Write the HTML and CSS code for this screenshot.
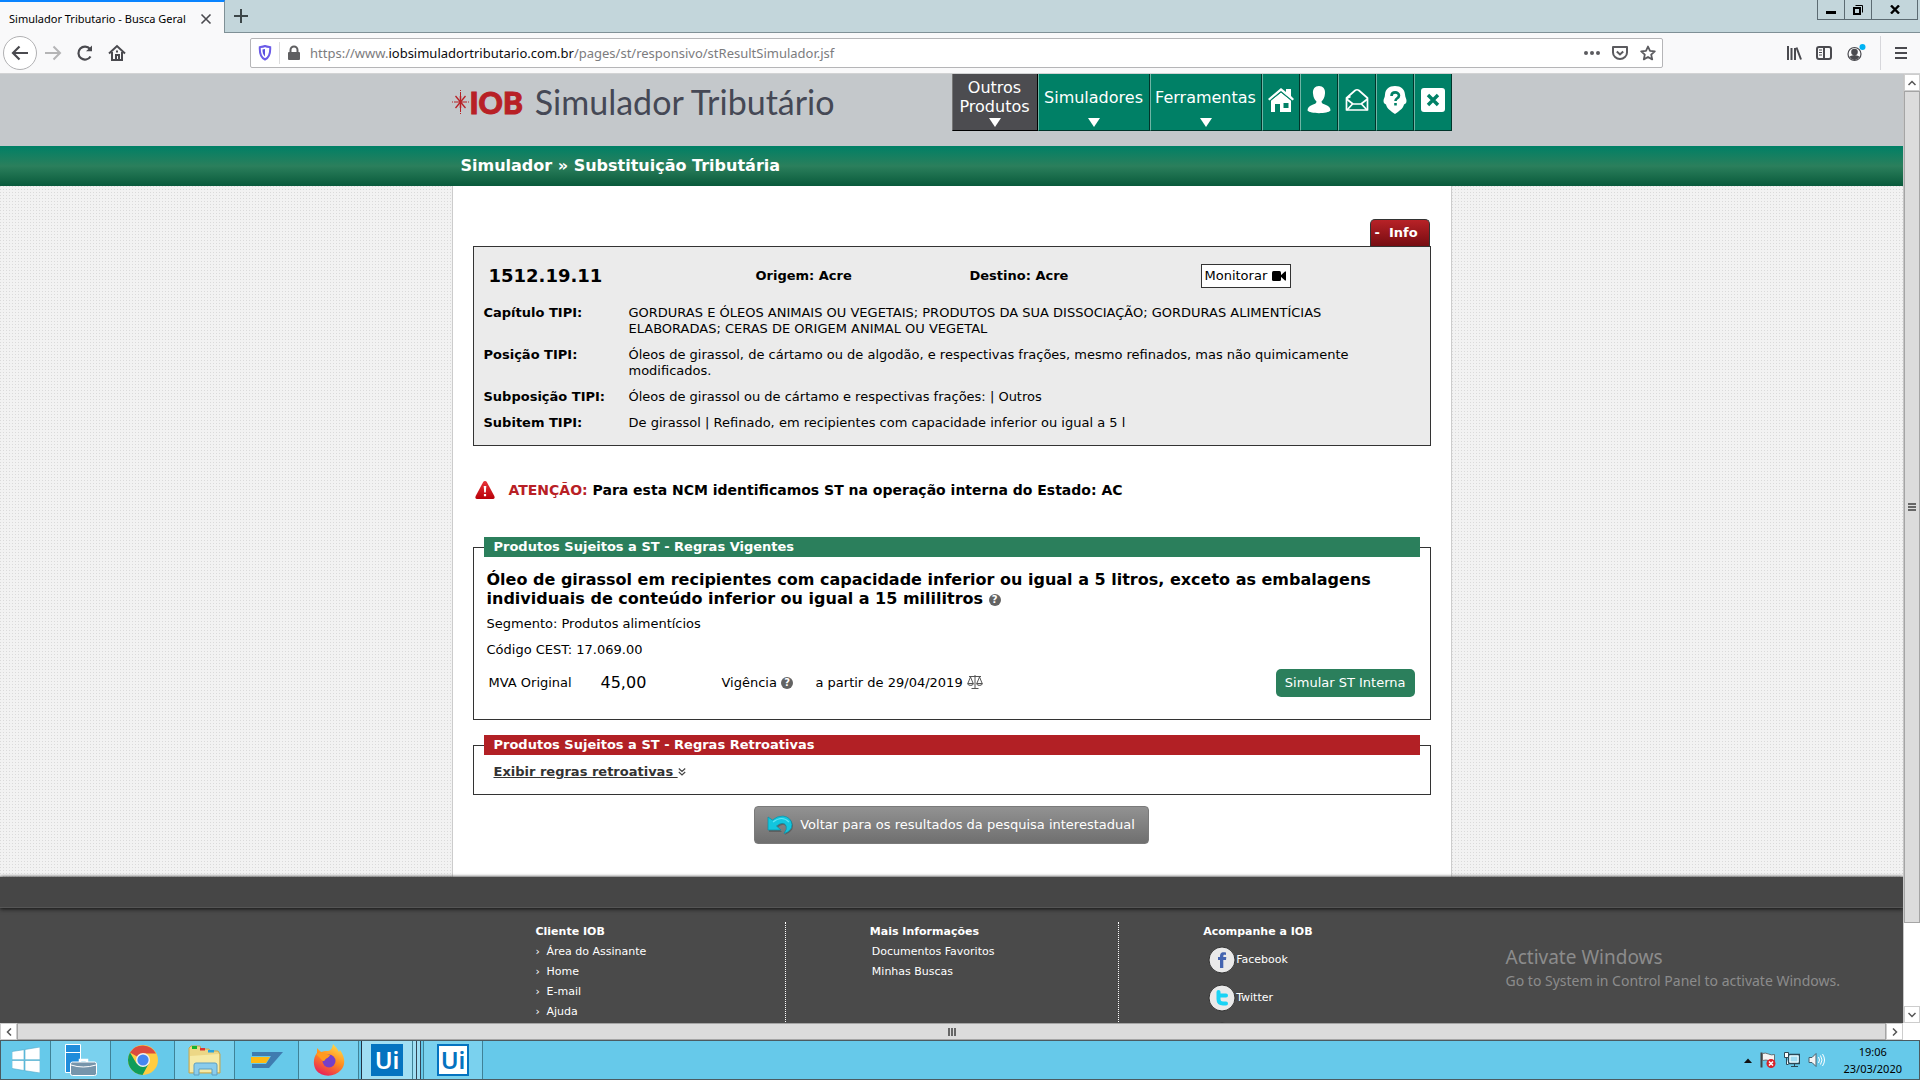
FILE: index.html
```html
<!DOCTYPE html>
<html lang="pt-BR">
<head>
<meta charset="utf-8">
<meta name="viewport" content="width=device-width, initial-scale=1">
<title>Simulador Tributario - Busca Geral</title>
<link rel="stylesheet" href="styles.css">
</head>
<body>
<div class="tabbar">
  <div class="tab">
    <span class="tab-title">Simulador Tributario - Busca Geral</span>
    <button class="plain" aria-label="Fechar aba"><svg width="12" height="12" viewBox="0 0 12 12" stroke="#4a4a4f" stroke-width="1.6"><path d="M1.5 1.5l9 9M10.500 1.500l-9 9"/></svg></button>
  </div>
  <button class="plain new-tab" aria-label="Nova aba"><svg width="14" height="14" viewBox="0 0 14 14" stroke="#3c4648" stroke-width="2"><path d="M7 0v14M0 7h14"/></svg></button>
  <div class="window-buttons">
    <button aria-label="Minimizar"><svg width="10" height="14" viewBox="0 0 10 14"><path d="M0 8h10v3H0z"/></svg></button>
    <button aria-label="Restaurar"><svg width="10" height="10" viewBox="0 0 10 10" fill="none" stroke="#000"><path d="M2.500 .5h7v7"/><path d="M1 3h6v6H1z" stroke-width="2"/></svg></button>
    <button class="wide" aria-label="Fechar"><svg width="10" height="9" viewBox="0 0 10 9" stroke="#000" stroke-width="2.400"><path d="M1 .5l8 8M9 .5l-8 8"/></svg></button>
  </div>
</div>
<div class="toolbar">
  <button class="plain back" aria-label="Voltar"><svg width="18" height="16" viewBox="0 0 18 16" fill="none" stroke="#4a4a4f" stroke-width="2.200"><path d="M17 8H2M8.500 1.500L2 8l6.500 6.500"/></svg></button>
  <button class="plain" aria-label="Avançar"><svg width="18" height="16" viewBox="0 0 18 16" fill="none" stroke="#b5b5b6" stroke-width="2"><path d="M1 8h15M9.500 1.500L16 8l-6.500 6.500"/></svg></button>
  <button class="plain" aria-label="Recarregar"><svg width="18" height="18" viewBox="0 0 18 18" fill="none" stroke="#4a4a4f" stroke-width="2.200"><path d="M14.500 12.500A6.500 6.500 0 1 1 14 5"/><path d="M16 1.500v5.700h-6z" fill="#4a4a4f" stroke="none"/></svg></button>
  <button class="plain" aria-label="Início"><svg width="18" height="18" viewBox="0 0 18 18" fill="none" stroke="#4a4a4f" stroke-width="2"><path d="M1 9.500L9 2l8 7.500"/><path d="M4 8v8h10V8"/><path d="M8 16v-5h3v5M8 7.500h2"/></svg></button>
  <div class="urlbar">
    <svg width="14" height="16" viewBox="0 0 14 16" fill="none"><path d="M7 1c2 .8 4 1 5.200 1.200C12.500 8 11.500 12.500 7 14.500 2.500 12.500 1.500 8 1.800 2.200 3 2 5 1.800 7 1z" stroke="#6b5be8" stroke-width="2"/><path d="M7 4v7.500C5 10 4.400 7.500 4.500 4.600z" fill="#5a4fe0"/></svg>
    <span class="url-line"></span>
    <svg width="14" height="16" viewBox="0 0 14 16"><rect x="1" y="7" width="12" height="8" rx="1" fill="#5f5f61"/><path d="M3.500 8V5a3.500 3.500 0 0 1 7 0v3" fill="none" stroke="#5f5f61" stroke-width="2"/></svg>
    <div class="url" role="textbox" aria-label="Endereço" contenteditable="true" spellcheck="false">https://www.<b>iobsimuladortributario.com.br</b>/pages/st/responsivo/stResultSimulador.jsf</div>
    <button class="plain" aria-label="Ações"><svg width="16" height="16" viewBox="0 0 16 16" fill="#5b5b5f"><circle cx="2" cy="8" r="2"/><circle cx="8" cy="8" r="2"/><circle cx="14" cy="8" r="2"/></svg></button>
    <button class="plain" aria-label="Pocket"><svg width="16" height="16" viewBox="0 0 16 16" fill="none" stroke="#5b5b5f" stroke-width="2"><path d="M1 2h14v5.500a7 6.500 0 0 1-14 0z" stroke-linejoin="round"/><path d="M4.800 6.500L8 9.500l3.200-3"/></svg></button>
    <button class="plain" aria-label="Favoritar"><svg width="16" height="16" viewBox="0 0 16 16" fill="none" stroke="#5b5b5f" stroke-width="1.800"><path d="M8 1.500l2 4.400 4.800.5-3.600 3.200 1 4.800L8 12l-4.200 2.400 1-4.800L1.200 6.400 6 5.900z" stroke-linejoin="round"/></svg></button>
  </div>
  <div class="tools">
    <button class="plain" aria-label="Biblioteca"><svg width="16" height="16" viewBox="0 0 16 16" fill="none" stroke="#4a4a4f" stroke-width="2"><path d="M2 1v14M5.500 3v12M9 3v12M10.500 2.500l4.500 12"/></svg></button>
    <button class="plain" aria-label="Barra lateral"><svg width="16" height="16" viewBox="0 0 16 16" fill="none" stroke="#4a4a4f" stroke-width="2"><rect x="1" y="2" width="14" height="12" rx="2"/><path d="M8 2v12"/><path d="M3 5h3M3 7.500h3M3 10h3" stroke-width="1"/></svg></button>
    <button class="plain" aria-label="Conta"><svg width="20" height="20" viewBox="0 0 20 20"><circle cx="8.500" cy="11" r="6.500" fill="none" stroke="#4a4a4f" stroke-width="1.200"/><circle cx="8.500" cy="9" r="3.300" fill="#4a4a4f"/><path d="M3.500 13.500q5-3 10 0-2 3.500-5 3.500t-5-3.500z" fill="#4a4a4f"/><circle cx="16.500" cy="4" r="3" fill="#00b3f4"/></svg></button>
    <span class="tool-line"></span>
    <button class="plain" aria-label="Menu"><svg width="12" height="12" viewBox="0 0 12 12" fill="#4a4a4f"><path d="M0 0h12v2H0zM0 5h12v2H0zM0 10h12v2H0z"/></svg></button>
  </div>
</div>

<div class="viewport">
  <div class="site">
    <header class="site-header">
      <div class="wrap header-row">
        <a class="logo" href="#" aria-label="IOB Simulador Tributário">
          <svg width="17" height="24" viewBox="0 0 17 24" stroke="#b82025" fill="none"><path d="M8.500 0v24" stroke-dasharray="1 1 20 1 1"/><path d="M0 12h17" stroke-dasharray="1 1 13 1 1"/><path d="M3.500 6l10 12M13.500 6l-10 12" stroke-width="1.300"/><path d="M8.500 6v12" stroke-width="1.500"/></svg>
          <span class="logo-iob">IOB</span>
          <span class="logo-name">Simulador Tributário</span>
        </a>
        <nav class="menu">
          <a class="menu-text dark" href="#"><span>Outros Produtos</span><i></i></a>
          <a class="menu-text" href="#"><span>Simuladores</span><i></i></a>
          <a class="menu-text" href="#"><span>Ferramentas</span><i></i></a>
          <a class="menu-icon" href="#" aria-label="Início"><svg width="26" height="26" viewBox="0 0 26 26" fill="#fff"><path d="M0 12L13 1l5 4V2h5v7l3 3-1.500 1.500L13 4 1.500 13.500z"/><path d="M3 13.500L13 5.500l10 8V25H12v-8H7v8H3z"/><path d="M15.500 16h5v5h-5z" fill="#008066"/><path d="M2 14L13 5l11 9" fill="none" stroke="#008066" stroke-width=".8"/></svg></a>
          <a class="menu-icon" href="#" aria-label="Usuário"><svg width="24" height="28" viewBox="0 0 24 28" fill="#fff"><path d="M12 0c4 0 6.500 3 6 7.500-.4 4-1.500 6-3.500 8 0 2 2 2.500 4.500 3.500 3 1.200 4.500 3 4.500 5.500C21 28 3 28 .5 24.500c0-2.500 1.500-4.300 4.500-5.500 2.500-1 4.500-1.500 4.500-3.500-2-2-3.100-4-3.500-8C5.500 3 8 0 12 0z"/></svg></a>
          <a class="menu-icon" href="#" aria-label="Mensagens"><svg width="24" height="24" viewBox="0 0 24 24" fill="none" stroke="#fff" stroke-width="1.700" stroke-linejoin="round"><path d="M1.500 10L10 2.500q2-1.500 4 0L22.500 10v12h-21z"/><path d="M1.500 11l6.500 5h8l6.500-5M8 15.500L2 22M16 15.500l6 6.500M1.500 10.500l4-2"/></svg></a>
          <a class="menu-icon" href="#" aria-label="Ajuda"><svg width="24" height="28" viewBox="0 0 24 28"><path d="M12 0c6 0 9.500 3 10 8.500.2 3 1.500 4 1.500 6.500s-1.500 3-2.500 3.500C20 23 16 25 12 28c-4-3-8-5-9-9.500C2 18 .5 17.500.5 15S2 11.500 2 8.500C2.500 3 6 0 12 0z" fill="#fff"/><path d="M8.500 10c0-5 7.500-4.500 7.500-.5 0 3-3.500 2.500-3.500 5.500M12.500 17v2.500" fill="none" stroke="#008066" stroke-width="2.600"/></svg></a>
          <a class="menu-icon" href="#" aria-label="Sair"><svg width="24" height="24" viewBox="0 0 24 24"><rect width="24" height="24" rx="3" fill="#fff"/><path d="M7 7l10 10M17 7L7 17" stroke="#008066" stroke-width="3.400"/></svg></a>
        </nav>
      </div>
    </header>
    <div class="crumbs"><h1 class="wrap">Simulador » Substituição Tributária</h1></div>
    <main class="main">
      <div class="wrap sheet">
        <button class="info-tab">- &nbsp;Info</button>
        <section class="info">
          <div class="info-head">
            <strong class="ncm">1512.19.11</strong>
            <strong>Origem: Acre</strong>
            <strong>Destino: Acre</strong>
            <button class="monitor">Monitorar <svg width="14" height="10" viewBox="0 0 14 10"><rect width="9" height="10" rx="1.500"/><path d="M8 5l5-4.500h1v9h-1z"/></svg></button>
          </div>
          <dl class="tipi">
            <dt>Capítulo TIPI:</dt><dd>GORDURAS E ÓLEOS ANIMAIS OU VEGETAIS; PRODUTOS DA SUA DISSOCIAÇÃO; GORDURAS ALIMENTÍCIAS<br>ELABORADAS; CERAS DE ORIGEM ANIMAL OU VEGETAL</dd>
            <dt>Posição TIPI:</dt><dd>Óleos de girassol, de cártamo ou de algodão, e respectivas frações, mesmo refinados, mas não quimicamente<br>modificados.</dd>
            <dt>Subposição TIPI:</dt><dd>Óleos de girassol ou de cártamo e respectivas frações: | Outros</dd>
            <dt>Subitem TIPI:</dt><dd>De girassol | Refinado, em recipientes com capacidade inferior ou igual a 5 l</dd>
          </dl>
        </section>
        <p class="alert">
          <svg width="20" height="18" viewBox="0 0 20 18"><defs><linearGradient id="al" x2="0" y2="1"><stop stop-color="#e8343a"/><stop offset="1" stop-color="#b80008"/></linearGradient></defs><path d="M10 0q1.200 0 1.800 1l7.500 14q1 3-1.500 3H2.200Q-.3 18 .7 15L8.200 1Q8.800 0 10 0z" fill="url(#al)"/><path d="M8.700 5h2.600l-.5 6.500H9.200zM8.900 13h2.200v2.200H8.900z" fill="#fff"/></svg>
          <span><em>ATENÇÃO:</em> Para esta NCM identificamos ST na operação interna do Estado: AC</span>
        </p>
        <fieldset class="rules">
          <legend>Produtos Sujeitos a ST - Regras Vigentes</legend>
          <h2>Óleo de girassol em recipientes com capacidade inferior ou igual a 5 litros, exceto as embalagens<br>individuais de conteúdo inferior ou igual a 15 mililitros <span class="help">?</span></h2>
          <p>Segmento: Produtos alimentícios</p>
          <p>Código CEST: 17.069.00</p>
          <div class="mva">
            <span>MVA Original</span>
            <span class="rate">45,00</span>
            <span>Vigência <span class="help">?</span></span>
            <span>a partir de 29/04/2019 <svg width="16" height="14" viewBox="0 0 16 14" fill="none" stroke="#555"><path d="M8 0v13M2 1.500h12M4.500 13.500h7M3.500 2L1 8M3.500 2L6 8M12.500 2L10 8M12.500 2L15 8"/><path d="M.5 8.500h6q-.5 2-3 2t-3-2zM9.500 8.500h6q-.5 2-3 2t-3-2z" fill="#ddd"/></svg></span>
            <button class="simulate">Simular ST Interna</button>
          </div>
        </fieldset>
        <fieldset class="rules retro">
          <legend>Produtos Sujeitos a ST - Regras Retroativas</legend>
          <a class="show" href="#">Exibir regras retroativas <svg width="8" height="8" viewBox="0 0 8 8" fill="none" stroke="#444" stroke-width="1.200"><path d="M.8 .5L4 3.500 7.200 .5M.8 4L4 7l3.200-3"/></svg></a>
        </fieldset>
        <button class="return"><svg width="26" height="20" viewBox="0 0 26 20"><path d="M2 3v14h13l-4.500-4.500Q17 7 20 12.500 21 16 17.500 20 26 17 26 10.500 25 3 17 2.500 11 2.500 6.500 6z" fill="#444" opacity=".5"/><path d="M1 2v13h13l-4.500-4Q16 6 19 10.500 20.500 14 17 18.500 25 16 25 9.500 24 2 16 1 10 1 5.500 5z" fill="#12c6de" stroke="#0690a8" stroke-width=".7"/><path d="M6 7q9-7 16 0" fill="none" stroke="#5fe6f4" stroke-width="1.200"/></svg>Voltar para os resultados da pesquisa interestadual</button>
      </div>
    </main>
    <footer class="footer">
      <div class="footer-band"></div>
      <div class="footer-body">
        <div class="wrap footer-cols">
          <section>
            <h3>Cliente IOB</h3>
            <ul class="arrows"><li><a href="#">Área do Assinante</a></li><li><a href="#">Home</a></li><li><a href="#">E-mail</a></li><li><a href="#">Ajuda</a></li></ul>
          </section>
          <section>
            <h3>Mais Informações</h3>
            <ul><li><a href="#">Documentos Favoritos</a></li><li><a href="#">Minhas Buscas</a></li></ul>
          </section>
          <section>
            <h3>Acompanhe a IOB</h3>
            <ul class="social">
              <li><a href="#"><svg width="28" height="28" viewBox="0 0 28 28"><circle cx="14" cy="14" r="13" fill="#e9e9e9" stroke="#333"/><path d="M18 6.500c-5-1-6 1-6 4.500h-2v3h2v8h3.300v-8H18l.3-3h-3c0-2 .2-2.400 2.700-2z" fill="#4464b0"/></svg>Facebook</a></li>
              <li><a href="#"><svg width="28" height="28" viewBox="0 0 28 28"><circle cx="14" cy="14" r="13" fill="#e9e9e9" stroke="#333"/><path d="M10.500 8v3.500H18M10.500 10v5q0 4.500 4.500 4.500h3" fill="none" stroke="#19d3f5" stroke-width="4" stroke-linecap="round"/></svg>Twitter</a></li>
              <li><a href="#" aria-label="YouTube"><svg width="28" height="28" viewBox="0 0 28 28"><circle cx="14" cy="14" r="13" fill="#e9e9e9" stroke="#333"/></svg></a></li>
            </ul>
          </section>
        </div>
      </div>
    </footer>
    <div class="watermark"><div>Activate Windows</div><p>Go to System in Control Panel to activate Windows.</p></div>
  </div>
  <div class="vscroll">
    <span class="sb"><svg width="8" height="6" viewBox="0 0 8 6" fill="none" stroke="#555" stroke-width="1.500"><path d="M.5 5L4 1.500 7.500 5"/></svg></span>
    <span class="thumb"><svg width="8" height="8" viewBox="0 0 8 8" fill="#666"><path d="M0 0h8v2H0zM0 3h8v2H0zM0 6h8v2H0z"/></svg></span>
    <span class="track"></span>
    <span class="sb"><svg width="8" height="6" viewBox="0 0 8 6" fill="none" stroke="#555" stroke-width="1.500"><path d="M.5 1L4 4.500 7.500 1"/></svg></span>
  </div>
</div>
<div class="hscroll">
  <span class="sb"><svg width="6" height="8" viewBox="0 0 6 8" fill="none" stroke="#555" stroke-width="1.500"><path d="M5 .5L1.500 4 5 7.500"/></svg></span>
  <span class="thumb"><svg width="8" height="8" viewBox="0 0 8 8" fill="#666"><path d="M0 0h2v8H0zM3 0h2v8H3zM6 0h2v8H6z"/></svg></span>
  <span class="sb"><svg width="6" height="8" viewBox="0 0 6 8" fill="none" stroke="#555" stroke-width="1.500"><path d="M1 .5L4.500 4 1 7.500"/></svg></span>
  <span class="corner"></span>
</div>
<div class="taskbar">
  <button class="task start" aria-label="Iniciar"><svg width="28" height="26" viewBox="0 0 28 26" fill="#fff" stroke="#4fa9c9" stroke-width=".6"><path d="M0 4.500L12 2.700v10H0zM13 2.500L28 0v12.700H13zM0 13.500h12v10L0 21.500zM13 13.500h15V26l-15-2.300z"/></svg></button>
  <button class="task open" aria-label="Gerenciador do Servidor"><svg width="32" height="32" viewBox="0 0 32 32"><path d="M.5 .5h15v28H.5z" fill="#1f8cdb" stroke="#fff"/><path d="M0 8.500h16" stroke="#fff"/><path d="M15 18v-2h7v2" fill="none" stroke="#fff" stroke-width="2.500"/><rect x="5.500" y="18" width="26" height="13.500" rx="2" fill="#7695ab" stroke="#fff"/><path d="M6 21q12 4 25 0" fill="none" stroke="#fff"/></svg></button>
  <button class="task chrome" aria-label="Chrome"><svg width="32" height="32" viewBox="0 0 32 32"><circle cx="16" cy="16" r="15" fill="#ffcd41"/><path d="M16 16L3 8.500A15 15 0 0 1 29 9.500H16z" fill="#dc4b3e"/><path d="M3 8.500A15 15 0 0 0 15.500 31l6-11L16 16l-6.500 3.500z" fill="#109d5a"/><circle cx="16" cy="16" r="7" fill="#f1f1f1"/><circle cx="16" cy="16" r="5.600" fill="#4587f3"/></svg></button>
  <button class="task open" aria-label="Explorador de Arquivos"><svg width="34" height="32" viewBox="0 0 34 32"><path d="M1 4l2-2h9l1 3h8l1 2h8l2 3v19H1z" fill="#ecd786" stroke="#c4a650"/><path d="M4 2h5v3H4z" fill="#16b52b"/><path d="M12 4h5v2.500h-5z" fill="#d33"/><path d="M20 6h6v2.500h-6z" fill="#28a3df"/><path d="M2 12l29-2v18H2z" fill="#f6eaa6"/><path d="M6 31V21q0-2 2-2h19q2 0 2 2v10h-5v-6H11v6z" fill="#8accec" stroke="#5c9fc2"/></svg></button>
  <button class="task chrome" aria-label="Aplicativo"><svg width="32" height="20" viewBox="0 0 32 20"><path d="M1 2h31L18 18H1v-4h14l5-8H1z" fill="#3f7cb0"/><path d="M0 7h19l-4 6H0z" fill="#fdb913"/></svg></button>
  <button class="task open" aria-label="Firefox"><svg width="32" height="32" viewBox="0 0 32 32"><defs><linearGradient id="ff" x1=".8" x2=".3" y2="1"><stop stop-color="#ffe14d"/><stop offset=".5" stop-color="#ff8a1e"/><stop offset="1" stop-color="#e8205a"/></linearGradient></defs><path d="M20 0c4 4 5 6 6 8l1-2c6 8 5 16 1 20-7 8-20 7-25 0C0 21 0 14 4 9V4l4 4 4-1c4 0 7 0 8-7z" fill="url(#ff)"/><circle cx="16" cy="17" r="6.500" fill="#7540c9"/><path d="M3 10c5-3 9 0 14 1-1 3-4 3-5 5s-3 1-4-1z" fill="#ff9a1f"/></svg></button>
  <button class="task active"><span class="ui">Ui</span></button>
  <span class="stack"></span><span class="stack"></span>
  <button class="task open last"><span class="ui light">Ui</span></button>
  <div class="tray">
    <svg width="8" height="5" viewBox="0 0 8 5"><path d="M0 5l4-4.500L8 5z" fill="#111"/></svg>
    <svg width="16" height="16" viewBox="0 0 16 16"><path d="M1.500 .5v15" stroke="#444" stroke-width="2"/><path d="M2.500 1.500q3-1 6 .5t6 .5v7q-4 0-6-1t-6 0z" fill="#f4f4f4" stroke="#555" stroke-width=".8"/><circle cx="11" cy="11.500" r="4.500" fill="#d8222a"/><path d="M9 9.500l4 4M13 9.500l-4 4" stroke="#fff" stroke-width="1.600"/></svg>
    <svg width="16" height="16" viewBox="0 0 16 16" fill="#9fdcf1" stroke="#2c4856"><path d="M4.500 2.500h11v9h-11z" stroke-width="1.300"/><path d="M6 4h8v6H6z" stroke="#fff" fill="none"/><path d="M7 14.500h7M10.500 12v2.500"/><path d="M.5 .5h4v5h-4zM2.500 5.500v7h2" fill="#fff"/></svg>
    <svg width="17" height="16" viewBox="0 0 17 16" fill="#f4f4f4" stroke="#46606c"><path d="M1 5.500h3l4-4v13l-4-4H1z"/><path d="M10.500 5q2 3 0 6M12.500 3.500q3 4.500 0 9M14.500 2q4 6 0 12" fill="none" stroke="#fff"/></svg>
    <div class="clock"><span>19:06</span><span>23/03/2020</span></div>
  </div>
</div>
</body>
</html>
```
FILE: styles.css
```css
* { box-sizing: border-box; }
body {
  margin: 0;
  height: 100vh;
  overflow: hidden;
  display: flex;
  flex-direction: column;
  font: 13px/16px "DejaVu Sans", sans-serif;
  color: #000;
  background: #fff;
}
p, h1, h2, h3, ul, dl, dd { margin: 0; padding: 0; }
ul { list-style: none; }
svg { flex: none; }
a { color: inherit; text-decoration: none; }
button { font: inherit; color: inherit; cursor: pointer; }
.plain { display: flex; align-items: center; justify-content: center; padding: 0; border: 0; background: none; }

/* browser chrome */
.tabbar { display: flex; align-items: stretch; height: 33px; flex: none; background: #c3d6db; border-bottom: 1px solid #7f9096; font: 11px/16px "Noto Sans", sans-serif; }
.tab { display: flex; align-items: center; gap: 10px; width: 225px; height: 33px; padding: 2px 12px 0 9px; background: #f9f9fa; border-top: 2px solid #0a84ff; border-right: 1px solid #7f9096; }
.tab-title { flex: 1; white-space: nowrap; }
.new-tab { width: 32px; }
.window-buttons { display: flex; margin: 0 2px 0 auto; height: 20px; border: 1px solid #5c6b72; border-top: 0; }
.window-buttons button { width: 27px; padding: 0; border: 0; border-right: 1px solid #5c6b72; background: none; display: flex; align-items: center; justify-content: center; }
.window-buttons .wide { width: 45px; border-right: 0; }
.toolbar { display: flex; align-items: center; height: 41px; flex: none; padding: 0 13px 0 3px; background: #f9f9fa; border-bottom: 1px solid #d2d3d4; }
.toolbar > .plain { width: 32px; height: 32px; }
.toolbar > .back { width: 34px; height: 34px; border: 1px solid #b1b1b3; border-radius: 50%; background: #fff; }
.urlbar { display: flex; align-items: center; gap: 7px; width: 1413px; flex: 0 1 1413px; height: 30px; margin-left: 117px; padding: 0 6px 0 7px; background: #fff; border: 1px solid #b5b5b7; border-radius: 2px; }
.urlbar .plain { margin-left: 5px; }
.url-line { width: 1px; height: 22px; background: #dcdcdd; }
.url { flex: 1; margin-left: 2px; font: 13px/18px "Noto Sans", sans-serif; color: #7c7c7e; outline: 0; white-space: nowrap; }
.url b { font-weight: 400; color: #0c0c0d; }
.tools { display: flex; align-items: center; gap: 14px; margin-left: auto; }
.tool-line { width: 1px; height: 34px; background: #d7d7db; }

/* scroll area */
.viewport { display: flex; flex: 1; min-height: 0; }
.site { position: relative; flex: 1; min-width: 0; display: flex; flex-direction: column; overflow: hidden; }
.wrap { width: 100%; max-width: 1000px; margin: 0 auto; }
.vscroll { display: flex; flex-direction: column; width: 17px; background: #fff; border-left: 1px solid #c6c6c6; }
.sb { display: flex; align-items: center; justify-content: center; flex: none; width: 17px; height: 17px; background: #fff; border: 1px solid #cdcdcd; }
.vscroll .sb { width: 16px; }
.thumb { display: flex; align-items: center; justify-content: center; background: #dcdcdc; border: 1px solid #a5a5a5; }
.vscroll .thumb { flex: 832; }
.track { flex: 83; }
.hscroll { display: flex; height: 17px; flex: none; background: #fff; }
.hscroll .thumb { flex: 1; }
.corner { width: 17px; }

/* header */
.site-header { flex: none; height: 72px; background: #c4c8cb; }
.header-row { display: flex; align-items: flex-start; justify-content: space-between; }
.logo { display: flex; align-items: center; height: 56px; }
.logo-iob { margin: 0 12px 0 1px; font: 900 30px/40px Lato, sans-serif; color: #b82025; -webkit-text-stroke: 1px #b82025; }
.logo-name { font: 34px/40px Lato, sans-serif; color: #454855; }
.menu { display: flex; height: 57px; color: #fff; font-size: 16px; line-height: 19px; }
.menu a { background: #008066; border-left: 1px solid #6fb5a5; border-right: 1px solid #00352a; border-bottom: 1px solid #00352a; }
.menu-text { display: flex; flex-direction: column; align-items: center; width: 112px; padding: 2px 0 3px; text-align: center; }
.menu .dark { width: 86px; background: #4c4c50; border-color: #777 #000 #000 #777; }
.menu-text span { flex: 1; display: flex; align-items: center; }
.menu-text i { border: 6px solid transparent; border-top: 9px solid #fff; border-bottom: 0; }
.menu-icon { display: flex; align-items: center; justify-content: center; width: 38px; padding-bottom: 4px; }
.crumbs { flex: none; background: linear-gradient(#008066, #2b7f5c 50%, #095a3b); }
.crumbs h1 { padding: 0 9px; font-size: 16px; line-height: 40px; color: #fff; }

/* content */
.main { flex: none; background: #f2f2f2 linear-gradient(90deg, transparent 2px, #f2f2f2 2px) 0 0 / 3px 3px; background: conic-gradient(from 270deg at 1px 1px, #dadada 90deg, #f2f2f2 0) 0 0 / 3px 3px; }
.sheet { display: flex; flex-direction: column; padding: 33px 20px; background: #fff; border: 1px solid #ccc; border-width: 0 1px; }
.info-tab { align-self: flex-end; width: 60px; height: 27px; margin-right: 1px; padding: 0 4px; text-align: left; color: #fff; font-weight: 700; background: linear-gradient(#b82227, #760c11); border: 1px solid #333; border-bottom: 0; border-radius: 5px 5px 0 0; }
.info { padding: 17px 10px 14px; background: #ebebeb; border: 1px solid #333; }
.info-head { display: grid; grid-template-columns: 267px 214px 231px auto; align-items: center; justify-content: start; padding-left: 5px; margin-bottom: 17px; }
.ncm { font-size: 18px; }
.monitor { display: flex; align-items: center; gap: 5px; height: 24px; padding: 0 4px 0 3px; background: #fff; border: 1px solid #333; }
.tipi { display: grid; grid-template-columns: 145px 1fr; row-gap: 10px; }
.tipi dt { font-weight: 700; }
.alert { display: flex; align-items: center; gap: 14px; height: 18px; margin: 35px 2px 38px; font-size: 14px; font-weight: 700; }
.alert em { font-style: normal; color: #b82025; }
.rules { display: block; min-width: 0; margin: 0 0 15px; padding: 13px 10px 22px; border: 1px solid #333; }
.rules legend { width: 100%; padding: 0 10px; font-weight: 700; line-height: 20px; color: #fff; background: #2b7f5c; }
.rules h2 { padding-left: 3px; font-size: 16px; line-height: 19px; }
.rules p { padding-left: 3px; margin-top: 10px; }
.rules h2 + p { margin-top: 8px; }
.help { display: inline-block; width: 12px; height: 12px; border-radius: 50%; background: #636363; color: #fff; font: 700 10px/12px "DejaVu Sans", sans-serif; text-align: center; vertical-align: 1px; }
.mva { display: grid; grid-template-columns: 112px 121px 94px 1fr auto; align-items: center; margin: 11px 5px 0; }
.mva svg { vertical-align: -2px; }
.rate { font-size: 16px; }
.simulate { height: 28px; padding: 0 9px; color: #fff; background: #2b7f5c; border: 0; border-radius: 5px; }
.retro { margin-bottom: 11px; padding: 9px 10px 14px; }
.retro legend { background: #b22025; }
.show { margin-left: 10px; font-weight: 700; color: #333; text-decoration: underline; }
.return { display: flex; align-items: center; align-self: center; gap: 7px; height: 38px; padding: 0 13px 0 12px; color: #fff; background: linear-gradient(#929292, #6f6f6f); border: 1px solid #7a7a7a; border-radius: 4px; }

/* footer */
.footer { flex: none; position: relative; color: #fff; background: #4a4a4a; font-size: 11px; line-height: 20px; box-shadow: 0 0 3px #777; }
.footer-band { height: 31px; background: #464646; border-bottom: 1px solid #555; box-shadow: 0 1px 4px #111; }
.footer-cols { display: grid; grid-template-columns: repeat(3, 1fr); padding-top: 14px; }
.footer-cols section { height: 160px; padding-left: 84px; border-left: 1px dotted #fff; }
.footer-cols section:first-child { border-left: 0; }
.footer-cols h3 { font-size: 11px; }
.footer-cols ul { padding-left: 2px; }
.footer-cols .arrows { padding-left: 0; }
.arrows li::before { content: "›"; display: inline-block; width: 11px; }
.social li { height: 38px; padding-left: 3px; }
.social a { display: flex; align-items: center; height: 36px; }
.watermark { position: absolute; right: 63px; bottom: 31px; color: #8c8c8c; font: 14px/22px "Noto Sans", sans-serif; }
.watermark div { font-size: 19px; line-height: 25px; }

/* taskbar */
.taskbar { display: flex; height: 40px; flex: none; background: #66c9ea; border: 1px solid #4b5b61; font-family: "Noto Sans", sans-serif; }
.task { display: flex; align-items: center; justify-content: center; width: 60px; padding: 0; border: 0; border-right: 1px solid #3f8297; background: none; }
.task.start { width: 50px; }
.task.chrome { width: 64px; }
.task.open { background: #7ad1ee; }
.task.active { width: 52px; margin-left: 2px; background: #a0def3; border-left: 1px solid #234; }
.task.last { margin-left: 2px; border-left: 1px solid #3f8297; }
.stack { width: 4px; background: #a0def3; border-right: 1px solid #345; }
.ui { width: 32px; height: 32px; background: #0473c0; border: 2px solid #0473c0; color: #fff; font: 600 24px/28px "Noto Sans", sans-serif; }
.ui.light { background: #fff; color: #0473c0; }
.tray { display: flex; align-items: center; gap: 8px; margin-left: auto; padding-right: 17px; }
.clock { display: flex; flex-direction: column; align-items: center; margin-left: 10px; font-size: 11px; line-height: 17px; }
```
